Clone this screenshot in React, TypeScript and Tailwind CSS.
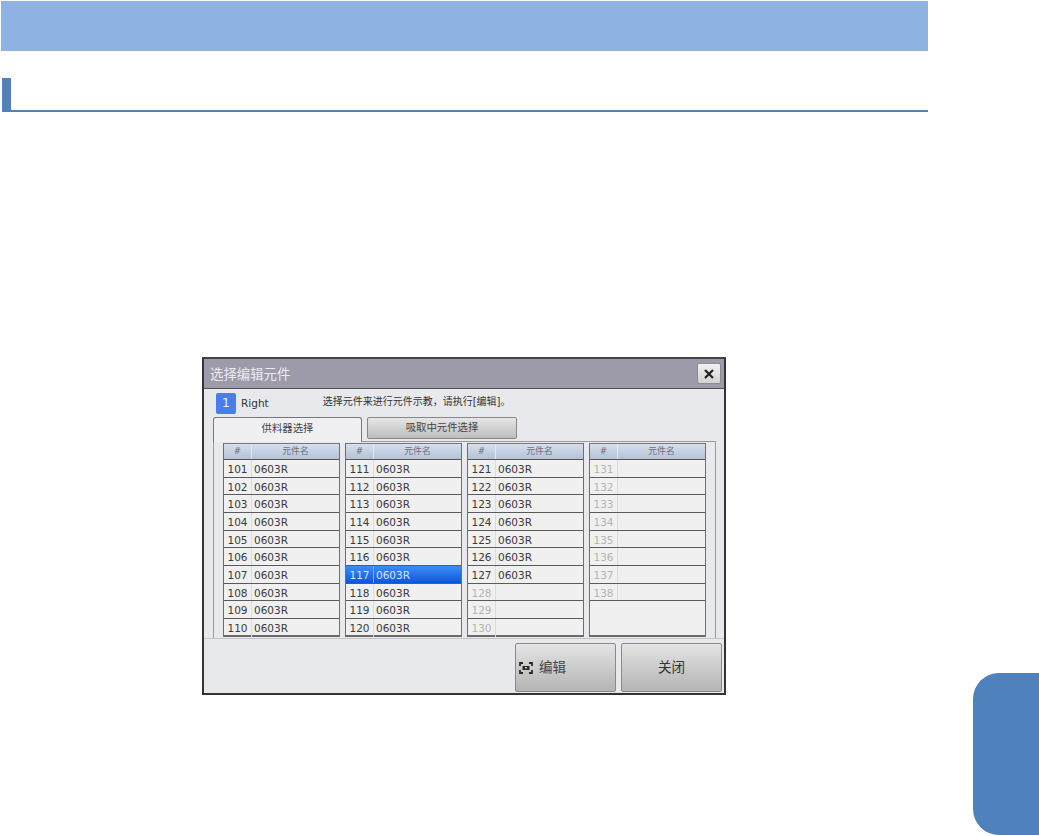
import React from 'react';

const FONT = "font-['DejaVu_Sans','Noto_Sans_CJK_SC',sans-serif]";

type Column = { start: number; filled: number; rows: number };

const COLUMNS: Column[] = [
  { start: 101, filled: 10, rows: 10 },
  { start: 111, filled: 10, rows: 10 },
  { start: 121, filled: 7, rows: 10 },
  { start: 131, filled: 0, rows: 8 },
];

const SELECTED = 117;

const PartColumn: React.FC<{ column: Column }> = ({ column }) => {
  const rows = Array.from({ length: column.rows }, (_, i) => column.start + i);

  return (
    <div className="w-[117px] h-[194px] flex flex-col bg-[#f0f0f0] border-x border-b-2 border-x-[#6f6f6f] border-b-[#6a6a6a]">
      {/* Header */}
      <div className="h-[17px] shrink-0 flex text-[8.8px] text-[#6b6f78] bg-gradient-to-b from-[#d5dfee] to-[#b5c2d5] border-t border-b border-t-[#777] border-b-[#555]">
        <div className="w-[28px] flex items-center justify-center border-r border-[#e4e8ef]">#</div>
        <div className="flex-1 flex items-center justify-center">元件名</div>
      </div>
      {/* Rows */}
      {rows.map((id, i) => {
        const filled = i < column.filled;
        const selected = id === SELECTED;
        const isLast = i === 9;
        return (
          <div
            key={id}
            className={`h-[17.67px] shrink-0 flex items-center text-[10.5px] ${isLast ? '' : 'border-b border-[#5a5a5a]'} ${
              selected ? 'bg-gradient-to-b from-[#3f8cf5] to-[#0a55e0] text-[#d8e6fb]' : 'text-[#3a3a3a]'
            }`}
          >
            <div
              className={`w-[28px] h-full pt-[3px] flex items-center justify-center border-r ${
                selected ? 'border-[#7fb0f5]' : 'border-[#dcdcdc]'
              } ${filled ? '' : 'text-[#b4b4b4]'}`}
            >
              {id}
            </div>
            <div className="pl-[2px] pt-[3px]">{filled ? '0603R' : ''}</div>
          </div>
        );
      })}
    </div>
  );
};

const ScanIcon = () => (
  <svg width="14" height="12" viewBox="0 0 14 12" fill="none" stroke="#2b2b2b" strokeWidth="1.8">
    <path d="M1 4V1h3M10 1h3v3M13 8v3h-3M4 11H1V8" />
    <path d="M3.5 4h7v4h-7z" fill="#2b2b2b" stroke="none" />
    <path d="M6 5h2v1.5H6z" fill="#c8c8c8" stroke="none" />
  </svg>
);

const App: React.FC = () => {
  return (
    <div className={`relative w-[1039px] h-[836px] overflow-hidden bg-white ${FONT}`}>
      {/* Top banner */}
      <div className="ml-px mt-px w-[927px] h-[50px] bg-[#8eb3e3]" />

      {/* Section heading */}
      <div className="ml-[2px] mt-[27px] w-[926px] h-[34px] flex items-stretch border-b-2 border-[#4f81bd]">
        <div className="w-[9px] bg-[#4f81bd]" />
      </div>

      {/* Dialog */}
      <div className="ml-[202px] mt-[245px] w-[524px] h-[338px] flex flex-col bg-[#e8e9ed] border-2 border-[#333] border-t-[#444]">
        <div className="h-[30px] shrink-0 flex items-center justify-between pl-[6px] pr-[3px] bg-[#9d9aa9] border-b border-[#555]">
          <span className="mt-[4px] text-[13.4px] text-[#ececf0]">选择编辑元件</span>
          <button className="w-[24px] h-[21px] flex items-center justify-center rounded-[2px] bg-gradient-to-b from-[#f2f2f2] to-[#d2d2d2] border border-[#8d8d8d]">
            <svg width="10" height="10" viewBox="0 0 10 10" stroke="#222" strokeWidth="2.2">
              <path d="M1 1l8 8M9 1l-8 8" />
            </svg>
          </button>
        </div>

        {/* Instruction row */}
        <div className="h-[27px] shrink-0 flex items-center pl-[12px]">
          <div className="w-[20px] h-[21px] mt-px flex items-center justify-center rounded-[2px] bg-[#4a7cec] text-[13px] text-[#e6eeff]">
            1
          </div>
          <span className="ml-[5px] mt-[2px] text-[10.5px] text-[#333]">Right</span>
          <span className="ml-[54px] -mt-[3px] text-[10px] text-[#333]">选择元件来进行元件示教，请执行[编辑]。</span>
        </div>

        {/* Tabs */}
        <div className="h-[25px] shrink-0 flex items-start pt-px pl-[9px] relative z-10">
          <div className="w-[149px] h-[25px] pb-[2px] flex items-center justify-center bg-[#f0f0f2] border border-b-0 border-[#777] rounded-t-[3px] text-[10.4px] text-[#444]">
            供料器选择
          </div>
          <div className="ml-[5px] w-[150px] h-[22px] flex items-center justify-center bg-gradient-to-b from-[#e6e6e6] to-[#bdbdbd] border border-[#888] rounded-[2px] text-[10.4px] text-[#444]">
            吸取中元件选择
          </div>
        </div>

        {/* Tab panel */}
        <div className="ml-[9px] w-[503px] h-[197px] shrink-0 flex gap-[5px] pl-[9px] pt-px bg-[#e8e9ed] border border-[#9a9a9a] border-b-0">
          {COLUMNS.map((column) => (
            <PartColumn key={column.start} column={column} />
          ))}
        </div>

        {/* Footer */}
        <div className="flex-1 flex justify-end gap-[5px] pt-[4px] pr-[2px] border-t border-[#c4c4c8]">
          <button className="w-[101px] h-[49px] flex items-center pl-[3px] gap-[6px] rounded-[2px] bg-gradient-to-b from-[#e4e4e4] to-[#b4b4b4] border border-[#8a8a8a] text-[13.5px] text-[#444]">
            <ScanIcon />
            编辑
          </button>
          <button className="w-[101px] h-[49px] flex items-center justify-center rounded-[2px] bg-gradient-to-b from-[#e4e4e4] to-[#b4b4b4] border border-[#8a8a8a] text-[13.5px] text-[#333]">
            关闭
          </button>
        </div>
      </div>

      {/* Chapter tab */}
      <div className="absolute left-[973px] top-[673px] w-[66px] h-[162px] bg-[#4f81bd] rounded-l-[26px]" />
    </div>
  );
};

export default App;
